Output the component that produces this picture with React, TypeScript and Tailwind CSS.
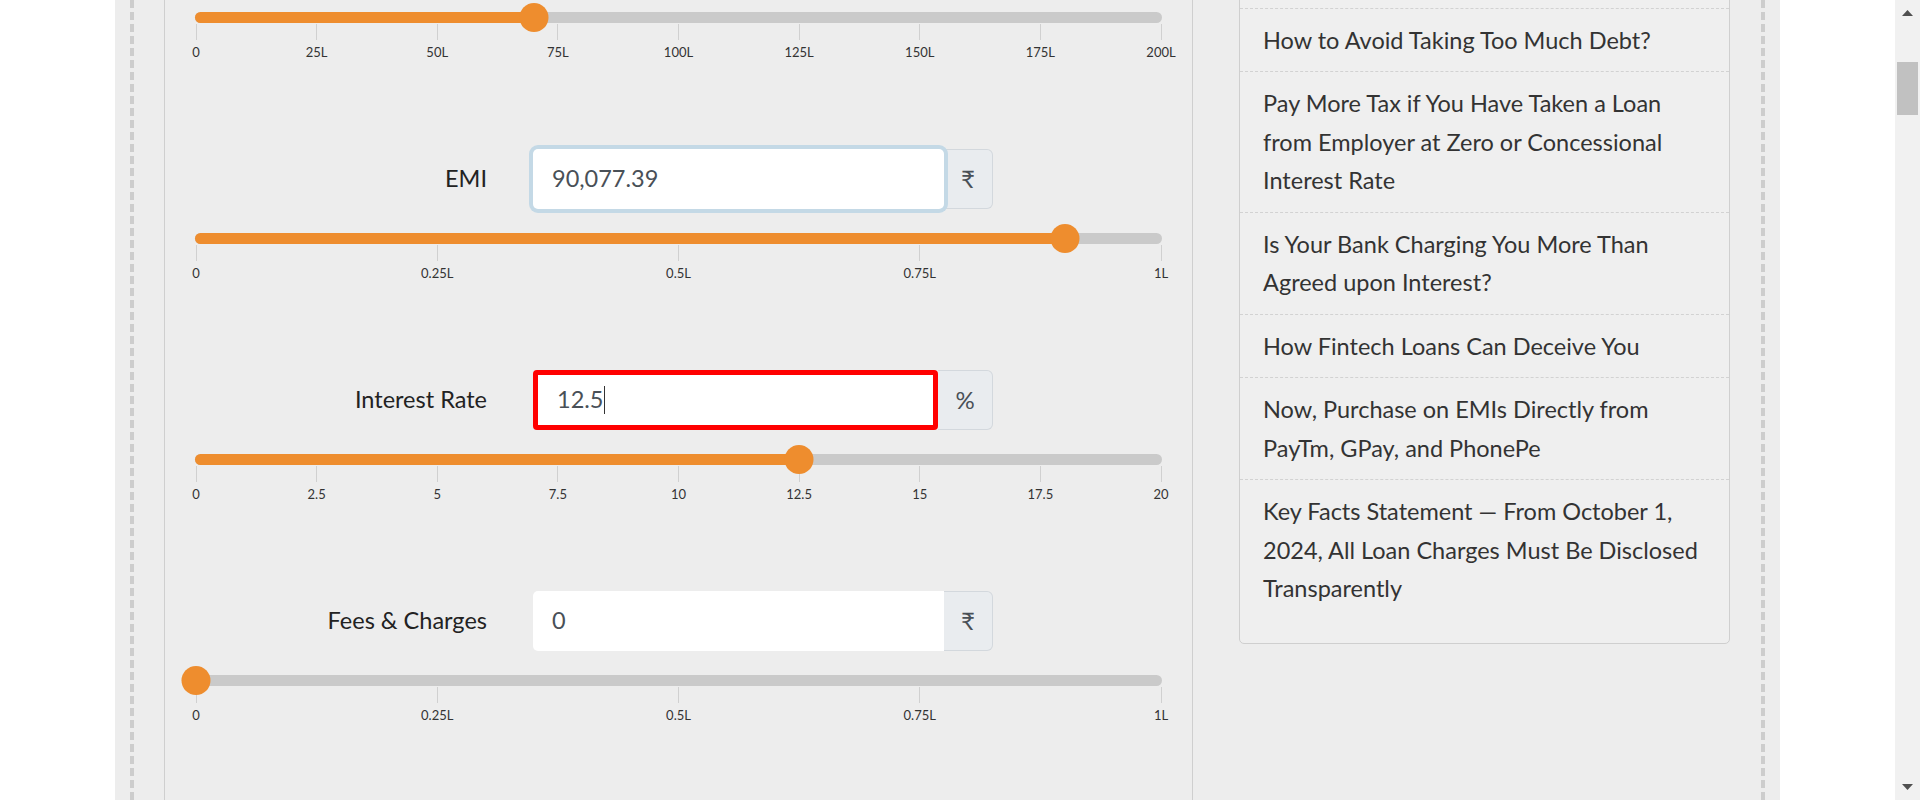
import React from "react";

const TRACK_W = 967;

type SliderProps = { value: number; max: number; ticks: string[] };

function Slider({ value, max, ticks }: SliderProps) {
  const span = TRACK_W - 2;
  const pos = 1 + (value / max) * span;
  return (
    <div className="relative mt-[15px] h-[57px] w-full">
      <div className="absolute left-0 right-0 top-[9px] h-[11px] rounded-full bg-[#cacaca]" />
      <div
        className="absolute left-0 top-[9px] h-[11px] rounded-full bg-[#ee8d2e]"
        style={{ width: pos }}
      />
      {ticks.map((t, i) => {
        const x = 1 + (i / (ticks.length - 1)) * span;
        return (
          <React.Fragment key={t}>
            <div className="absolute top-[21px] h-[16px] w-px bg-[#d0d0d0]" style={{ left: x - 0.5 }} />
            <div
              className="absolute top-[41px] -translate-x-1/2 text-[13px] leading-[16px] text-[#333]"
              style={{ left: x }}
            >
              {t}
            </div>
          </React.Fragment>
        );
      })}
      <div
        className="absolute top-0 h-[29px] w-[29px] -translate-x-1/2 rounded-full bg-[#ee8d2e]"
        style={{ left: pos }}
      />
    </div>
  );
}

type FieldProps = {
  label: string;
  value: string;
  unit: string;
  state?: "normal" | "focus" | "error";
  slider: SliderProps;
};

function Field({ label, value, unit, state = "normal", slider }: FieldProps) {
  let box = "w-[411px] rounded-l-[5px]";
  if (state === "focus") box = "w-[411px] rounded-[5px] shadow-[0_0_0_4px_#c4d9e6]";
  if (state === "error") box = "w-[405px] rounded-[4px] border-[5px] border-[#ff0000] pl-[14px]";

  return (
    <div>
      <div className="flex h-[60px] items-center">
        <div className="w-[292px] text-right text-[23.5px] text-[#222]">{label}</div>
        <div className="ml-[46px] flex h-[60px] w-[460px]">
          <div
            className={`relative z-10 flex items-center bg-white pl-[19px] text-[23.5px] text-[#495057] ${box}`}
          >
            {value}
            {state === "error" && <span className="ml-px h-[28px] w-px bg-[#333]" />}
          </div>
          <div className="flex flex-1 items-center justify-center rounded-r-[6px] border border-l-0 border-[#d3d8dd] bg-[#e9ecef] text-[24px] text-[#495057]">
            {unit}
          </div>
        </div>
      </div>
      <Slider {...slider} />
    </div>
  );
}

const lakh = ["0", "0.25L", "0.5L", "0.75L", "1L"];

const articles = [
  "How Your Credit Score Affects Your Loan",
  "How to Avoid Taking Too Much Debt?",
  "Pay More Tax if You Have Taken a Loan from Employer at Zero or Concessional Interest Rate",
  "Is Your Bank Charging You More Than Agreed upon Interest?",
  "How Fintech Loans Can Deceive You",
  "Now, Purchase on EMIs Directly from PayTm, GPay, and PhonePe",
  "Key Facts Statement — From October 1, 2024, All Loan Charges Must Be Disclosed Transparently",
];

function Scrollbar() {
  return (
    <div className="flex w-[25px] shrink-0 flex-col items-center bg-[#f1f1f1]">
      <svg className="mt-[10px]" width="11" height="6" viewBox="0 0 11 6">
        <path d="M0 6 L5.5 0 L11 6 Z" fill="#505050" />
      </svg>
      <div className="mt-[46px] h-[53px] w-[21px] bg-[#c1c1c1]" />
      <svg className="mb-[10px] mt-auto" width="11" height="6" viewBox="0 0 11 6">
        <path d="M0 0 L5.5 6 L11 0 Z" fill="#505050" />
      </svg>
    </div>
  );
}

export default function App() {
  return (
    <div className="flex h-[800px] w-full overflow-hidden bg-white font-['Lato','Open_Sans',sans-serif] text-[#333]">
      <div className="flex-1 overflow-hidden">
        <div className="mx-auto h-full w-[1665px] bg-[#ededed] px-[15px]">
          <div className="flex h-full flex-col border-x-4 border-dashed border-[#cdcdcd] px-[30px]">
            <div className="-mt-[102px] flex items-start gap-[46px]">
              <section className="flex min-h-[1000px] w-[1029px] flex-col gap-[89px] border-x border-[#cfcfcf] px-[30px] pt-[30px]">
                <Field
                  label="Loan Amount"
                  value="70,00,000"
                  unit="₹"
                  slider={{
                    value: 70,
                    max: 200,
                    ticks: ["0", "25L", "50L", "75L", "100L", "125L", "150L", "175L", "200L"],
                  }}
                />
                <Field
                  label="EMI"
                  value="90,077.39"
                  unit="₹"
                  state="focus"
                  slider={{ value: 90077.39, max: 100000, ticks: lakh }}
                />
                <Field
                  label="Interest Rate"
                  value="12.5"
                  unit="%"
                  state="error"
                  slider={{
                    value: 12.5,
                    max: 20,
                    ticks: ["0", "2.5", "5", "7.5", "10", "12.5", "15", "17.5", "20"],
                  }}
                />
                <Field
                  label="Fees & Charges"
                  value="0"
                  unit="₹"
                  slider={{ value: 0, max: 100000, ticks: lakh }}
                />
              </section>

              <aside className="mt-[23px] w-[491px] rounded-[5px] border border-[#cfcfcf] bg-[#efefef] py-[23px]">
                <ul>
                  {articles.map((a, i) => (
                    <li
                      key={a}
                      className={`py-[12px] pl-[23px] pr-[20px] text-[23.5px] leading-[38.5px] text-[#333] ${
                        i > 0 ? "border-t border-dashed border-[#d2d2d2]" : ""
                      }`}
                    >
                      {a}
                    </li>
                  ))}
                </ul>
              </aside>
            </div>
          </div>
        </div>
      </div>
      <Scrollbar />
    </div>
  );
}
